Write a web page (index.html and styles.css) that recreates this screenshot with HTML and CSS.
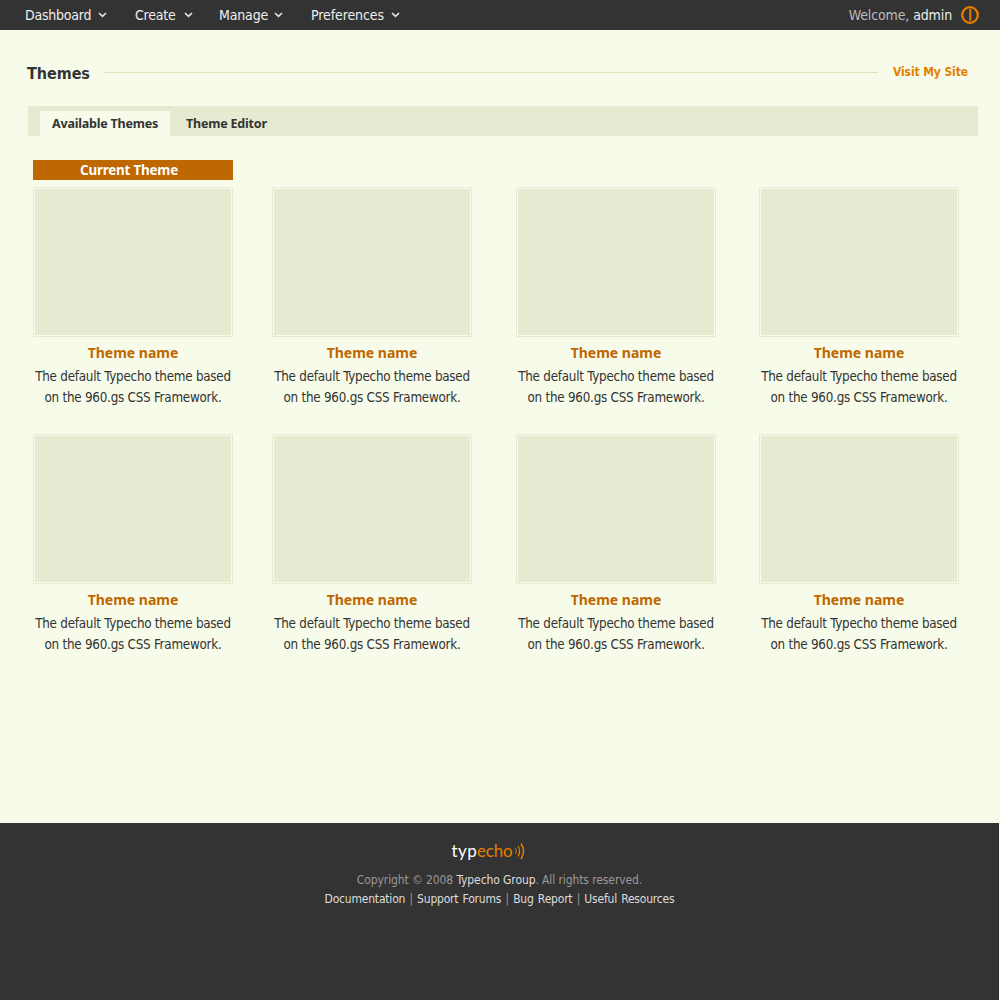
FILE: index.html
```html
<!DOCTYPE html>
<html lang="en">
<head>
<meta charset="utf-8">
<title>Themes - Typecho</title>
<link rel="stylesheet" href="styles.css">
</head>
<body>
<svg width="0" height="0" class="defs"><defs>
<symbol id="chevron" viewBox="0 0 9 6"><path d="M1 1l3.5 3.3L8 1" fill="none" stroke="#e8e8e8" stroke-width="1.6"/></symbol>
</defs></svg>
<header class="topbar">
  <nav class="menu">
    <a class="menu-item dashboard">Dashboard<svg class="chevron"><use href="#chevron"/></svg></a>
    <a class="menu-item create">Create<svg class="chevron"><use href="#chevron"/></svg></a>
    <a class="menu-item manage">Manage<svg class="chevron"><use href="#chevron"/></svg></a>
    <a class="menu-item preferences">Preferences<svg class="chevron"><use href="#chevron"/></svg></a>
  </nav>
  <div class="user"><span class="greeting">Welcome, <a>admin</a></span>
    <svg class="power" viewBox="0 0 20 20"><circle cx="10" cy="10" r="7.8" fill="none" stroke="#e47e00" stroke-width="2.3"/><path d="M10.3 4v11.8" stroke="#e47e00" stroke-width="2"/></svg>
  </div>
</header>
<main class="content">
  <div class="heading"><h1>Themes</h1><span class="rule"></span><a class="visit">Visit My Site</a></div>
  <div class="tabs"><a class="tab active">Available Themes</a><a class="tab">Theme Editor</a></div>
  <div class="current">Current Theme</div>
  <section class="themes">
    <article class="theme"><div class="thumb"></div><h2>Theme name</h2><p>The default Typecho theme based<br>on the 960.gs CSS Framework.</p></article>
    <article class="theme"><div class="thumb"></div><h2>Theme name</h2><p>The default Typecho theme based<br>on the 960.gs CSS Framework.</p></article>
    <article class="theme"><div class="thumb"></div><h2>Theme name</h2><p>The default Typecho theme based<br>on the 960.gs CSS Framework.</p></article>
    <article class="theme"><div class="thumb"></div><h2>Theme name</h2><p>The default Typecho theme based<br>on the 960.gs CSS Framework.</p></article>
    <article class="theme"><div class="thumb"></div><h2>Theme name</h2><p>The default Typecho theme based<br>on the 960.gs CSS Framework.</p></article>
    <article class="theme"><div class="thumb"></div><h2>Theme name</h2><p>The default Typecho theme based<br>on the 960.gs CSS Framework.</p></article>
    <article class="theme"><div class="thumb"></div><h2>Theme name</h2><p>The default Typecho theme based<br>on the 960.gs CSS Framework.</p></article>
    <article class="theme"><div class="thumb"></div><h2>Theme name</h2><p>The default Typecho theme based<br>on the 960.gs CSS Framework.</p></article>
  </section>
</main>
<footer class="footer">
  <div class="logo"><span class="typ">typ</span><span class="echo">echo</span><svg class="waves" viewBox="0 0 11 18"><g fill="none" stroke="#e47e00"><path d="M1.5 6.2q1.8 2.6 0 5.6" stroke-width="1"/><path d="M4 4q3.4 5 0 10.4" stroke-width="1.2"/><path d="M7 1.5q5 7.5 0 15.5" stroke-width="1.5"/></g></svg></div>
  <p class="copyright">Copyright © 2008 <a>Typecho Group</a>. All rights reserved.</p>
  <p class="links"><a>Documentation</a> | <a>Support Forums</a> | <a>Bug Report</a> | <a>Useful Resources</a></p>
</footer>
</body>
</html>
```
FILE: styles.css
```css
* { box-sizing: border-box; }
body {
  margin: 0;
  min-height: 1000px;
  display: flex;
  flex-direction: column;
  background: #f7fbe9;
  color: #333;
  font-family: "DejaVu Sans Condensed", "DejaVu Sans", Tahoma, sans-serif;
}
h1, h2, p { margin: 0; }
.defs { display: block; height: 0; }

.topbar {
  height: 30px;
  background: #333;
  display: flex;
  justify-content: space-between;
  padding: 0 20px 0 25px;
  font-size: 14px;
  line-height: 30px;
}
.menu { display: grid; grid-template-columns: 110px 84px 92px 100px; }
.menu-item { display: flex; align-items: center; color: #eee; white-space: nowrap; }
.chevron { width: 9px; height: 6px; margin: 0 0 0 7px; }
.dashboard { letter-spacing: -0.23px; }
.create { letter-spacing: -0.2px; }
.create .chevron { margin-left: 8px; }
.manage { letter-spacing: -0.15px; }
.manage .chevron { margin-left: 6px; }
.preferences { letter-spacing: -0.1px; }
.user { display: flex; align-items: center; gap: 8px; color: #bbb; letter-spacing: -0.12px; }
.user a { color: #eee; }
.power { width: 20px; height: 20px; }

.content { flex: 1; padding: 30px 22px 0 27px; }
.heading { display: flex; align-items: center; height: 26px; padding-right: 10px; }
.heading h1 { font-size: 16px; line-height: 26px; width: 76px; padding-top: 2px; letter-spacing: -0.05px; }
.rule { flex: 1; height: 1px; background: #dfe4bd; margin: 0 15px 1px 0; }
.visit { font-size: 12px; font-weight: 700; line-height: 24px; margin-bottom: 2px; letter-spacing: -0.1px; color: #e47e00; }
.tabs {
  display: flex;
  height: 30px;
  margin: 20px 0 0 1px;
  padding: 5px 0 0 12px;
  background: #e6ead0;
  font: 700 12.5px/25px "Noto Sans", sans-serif;
}
.tab { padding: 0 4px 0 16px; letter-spacing: -0.2px; }
.tab.active { width: 130px; padding: 0 0 0 12px; background: #f7fbe9; }
.current {
  width: 200px;
  height: 20px;
  margin: 24px 0 7px 6px;
  padding-right: 8px;
  background: #bf6700;
  color: #fff;
  text-align: center;
  font: 700 13.4px/20px "Noto Sans", sans-serif;
  letter-spacing: -0.2px;
}
.themes {
  display: grid;
  grid-template-columns: 239px 244px 243px 200px;
  grid-auto-rows: 247px;
  margin-left: 6px;
}
.theme { width: 200px; text-align: center; }
.thumb {
  height: 150px;
  padding: 1px;
  border: 1px solid #e6ead0;
  background: #e6ead0 content-box;
}
.theme h2 { font: 700 14px/22px "Noto Sans", sans-serif; color: #bf6700; margin-top: 5px; }
.theme p { font-size: 13.3px; line-height: 21px; letter-spacing: -0.24px; margin-top: 2px; white-space: nowrap; }

.footer { height: 177px; margin-right: 1px; background: #333; text-align: center; padding-top: 18px; color: #999; font-size: 12px; }
.footer a { color: #ddd; }
.footer p { height: 19px; line-height: 19px; }
.logo {
  display: flex;
  justify-content: center;
  height: 20px;
  margin: 0 23px 10px 0;
  font: 17px/20px Lato, sans-serif;
}
.typ { color: #fff; letter-spacing: 0.4px; }
.echo { color: #e47e00; letter-spacing: -0.2px; }
.waves { width: 11px; height: 18px; margin: 1px 0 0 1px; }
.copyright { letter-spacing: -0.1px; }
.links { letter-spacing: -0.2px; word-spacing: 1px; }
```
